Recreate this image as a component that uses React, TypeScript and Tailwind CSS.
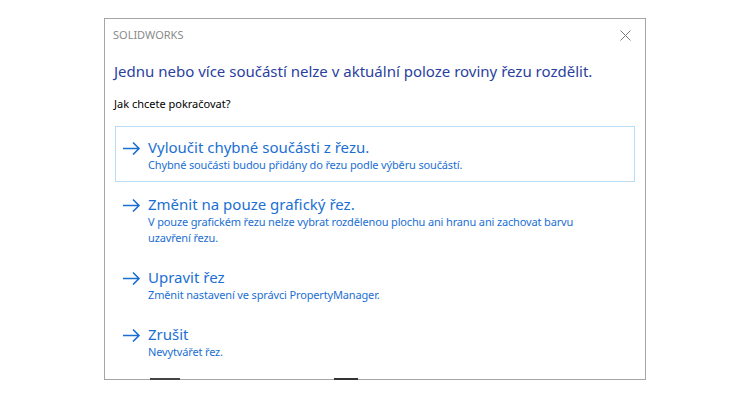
const options = [
  {
    title: "Vyloučit chybné součásti z řezu.",
    desc: "Chybné součásti budou přidány do řezu podle výběru součástí.",
    active: true,
  },
  {
    title: "Změnit na pouze grafický řez.",
    desc: "V pouze grafickém řezu nelze vybrat rozdělenou plochu ani hranu ani zachovat barvu uzavření řezu.",
  },
  {
    title: "Upravit řez",
    desc: "Změnit nastavení ve správci PropertyManager.",
  },
  {
    title: "Zrušit",
    desc: "Nevytvářet řez.",
  },
];

function Arrow() {
  return (
    <svg width="19" height="14" viewBox="0 0 19 14" className="shrink-0 mt-[4px]">
      <path d="M1 7.5H17M11 1.5L17 7.5L11 13.5" fill="none" stroke="#1b6fd3" strokeWidth="1.6" />
    </svg>
  );
}

export default function App() {
  return (
    <div className="w-[750px] h-[400px] bg-white pl-[104px] pt-[18px] font-['Noto_Sans',sans-serif]">
      <div className="w-[542px] h-[362px] border border-[#a5a5a5] bg-white flex flex-col overflow-hidden relative">
        <div className="flex items-center justify-between h-[31px] pl-[8px] pr-[14px] pt-[1px]">
          <span className="text-[11px] text-[#8a8a8a]">SOLIDWORKS</span>
          <svg width="11" height="11" viewBox="0 0 11 11">
            <path d="M0.5 0.5L10.5 10.5M10.5 0.5L0.5 10.5" stroke="#7a7a7a" strokeWidth="1" />
          </svg>
        </div>
        <div className="px-[9px] pt-[9px]">
          <h1 className="text-[15px] leading-[24px] text-[#2a3f9e]">
            Jednu nebo více součástí nelze v aktuální poloze roviny řezu rozdělit.
          </h1>
          <p className="text-[11px] leading-[16px] text-black mt-[13px]">Jak chcete pokračovat?</p>
        </div>
        <div className="flex flex-col pl-[10px] pr-[10px] mt-[14px] gap-[1px]">
          {options.map((o) => (
            <div
              key={o.title}
              className={
                o.active
                  ? "flex gap-[7px] border border-[#b9dcf7] pl-[6px] pr-[10px] pt-[10px] pb-[8px]"
                  : "flex gap-[7px] border border-transparent pl-[6px] pr-[10px] pt-[10px] pb-[8px]"
              }
            >
              <Arrow />
              <div className="flex flex-col">
                <span className="text-[15px] leading-[20px] text-[#1b6fd3]">{o.title}</span>
                <span className="text-[11px] leading-[16px] tracking-[-0.15px] text-[#1b6fd3] max-w-[440px]">
                  {o.desc}
                </span>
              </div>
            </div>
          ))}
        </div>
      </div>
      <div className="flex h-0 relative -top-[2px]">
        <div className="ml-[46px] w-[30px] h-[2px] bg-[#444]" />
        <div className="ml-[154px] w-[24px] h-[2px] bg-[#333]" />
      </div>
    </div>
  );
}
